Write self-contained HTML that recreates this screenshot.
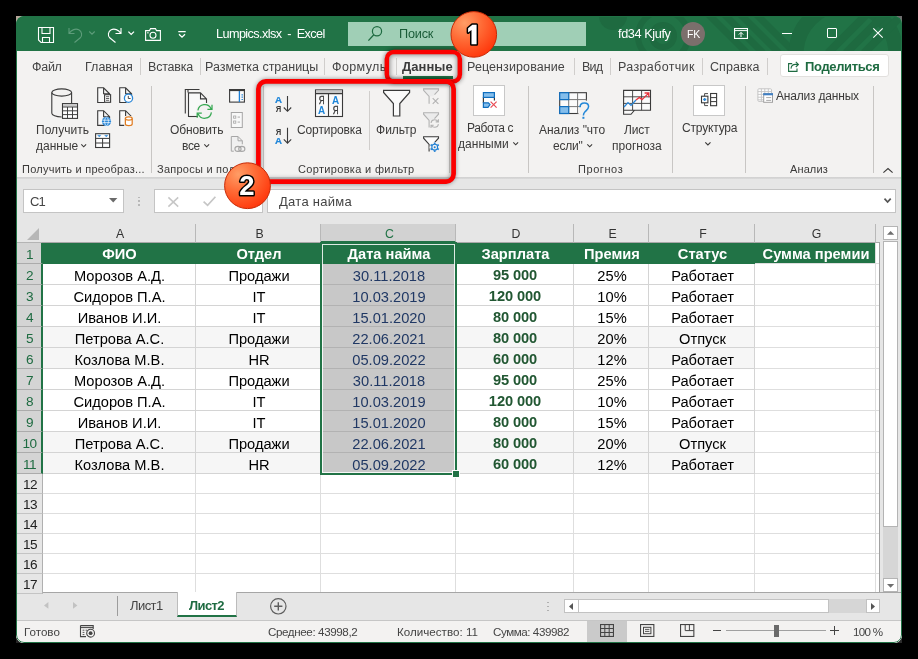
<!DOCTYPE html>
<html><head><meta charset="utf-8"><title>Excel</title>
<style>
*{box-sizing:border-box;margin:0;padding:0}
html,body{width:918px;height:659px;background:#000;overflow:hidden}
body{font-family:"Liberation Sans",sans-serif;font-size:13px;color:#333;position:relative}
.a{position:absolute}
svg{display:block;overflow:visible}
#win{left:0;top:0;width:918px;height:659px;background:#f3f2f1;clip-path:inset(16px 16px 16px 16px round 8px)}
#winb{left:16px;top:16px;width:886px;height:627px;border:1px solid #217346;border-radius:8px;pointer-events:none}
.t{white-space:nowrap;line-height:1}
.sep{width:1px;background:#c8c6c4}
.wb{background:#fff;border:1px solid #c6c6c6}
.ch{top:224px;height:19px;font-size:12.3px;color:#333;text-align:center;line-height:20px;background:#e6e6e6;border-right:1px solid #b8b8b8;border-bottom:1px solid #a8a8a8;padding-left:3px}
.ch.sel{background:#d2d2d2;color:#217346;border-bottom:2px solid #217346}
.rh{left:17px;width:26px;z-index:2;padding-left:1px;letter-spacing:-0.5px;background:#e6e6e6;font-size:13.6px;color:#222;text-align:center;border-bottom:1px solid #c4c4c4;border-right:1px solid #b0b0b0}
.rh.rsel{background:#d4d4d4;color:#1e6b41;border-right:2px solid #217346;border-bottom-color:#ababab}
.c{font-size:14.67px;color:#000;text-align:center;white-space:nowrap;border-right:1px solid #d4d4d4;border-bottom:1px solid #d4d4d4;overflow:hidden;padding-left:2px;padding-top:1px}
.h{background:#217346;color:#fff;font-weight:bold;border-color:#217346;padding-top:0}
.g{color:#215732;font-weight:bold;letter-spacing:-0.1px;padding-top:0;padding-left:1px}
.s{background:#c8c8c8;color:#203864;border-color:#b2b2b2}
.t,.c,.ch,.rh{will-change:transform}
.z{background:#f6f6f6}
.e{border-color:#dedede}

</style></head><body>
<div class="a" style="left:16px;top:16px;width:6px;height:6px;background:#b8a69a"></div>
<div class="a" style="left:896px;top:16px;width:6px;height:6px;background:#6e6e6e"></div>
<div class="a" style="left:16px;top:637px;width:6px;height:6px;background:#262626"></div>
<div class="a" style="left:896px;top:637px;width:6px;height:6px;background:#2c2c2c"></div>
<div id="win" class="a">
<!-- s_title -->
<div class="a" style="left:16px;top:16px;width:886px;height:35px;background:#217346;"></div>
<svg class="a" style="left:0px;top:0px" width="918" height="659"><defs><clipPath id="tc"><rect x="16" y="16" width="886" height="35"/></clipPath></defs><g clip-path="url(#tc)" fill="none" stroke="#1e6a40"><circle cx="613" cy="16" r="14" fill="#1e6a40" stroke="none"/><circle cx="663" cy="36" r="11" stroke-width="6"/><circle cx="663" cy="36" r="25" stroke-width="6"/><path d="M708 14L747 53" stroke-width="7"/><path d="M724 14L763 53" stroke-width="7"/><path d="M740 14L779 53" stroke-width="7"/><path d="M756 14L795 53" stroke-width="7"/><circle cx="846" cy="54" r="50" stroke-width="15"/><path d="M828 53L867 14" stroke-width="8"/><path d="M846 53L885 14" stroke-width="8"/><path d="M864 53L903 14" stroke-width="8"/></g></svg>
<svg class="a" style="left:38px;top:27px" width="16" height="16"><path d="M.5 .5H15.5V15.5H3L.5 13Z M4 .5V6.5H12V.5 M4.5 15.5V10.5H11.5V15.5" fill="none" stroke="#fff" stroke-width="1.1"/></svg>
<svg class="a" style="left:68px;top:27px" width="15" height="16"><path d="M1 1V6.5H6.5 M1.2 6.3C3.5 2.8 7.5 1.2 10.8 2.8C14 4.6 14.5 8.3 12.3 10.8L6.5 15.5" fill="none" stroke="#5d9c7a" stroke-width="1.1"/></svg>
<svg class="a" style="left:89px;top:31px" width="6" height="4"><path d="M.3 .5L3 3.2L5.7 .5" fill="none" stroke="#5d9c7a" stroke-width="1.1"/></svg>
<svg class="a" style="left:107px;top:27px" width="15" height="16"><path d="M14 1V6.5H8.5 M13.8 6.3C11.5 2.8 7.5 1.2 4.2 2.8C1 4.6 .5 8.3 2.7 10.8L8.5 15.5" fill="none" stroke="#fff" stroke-width="1.1"/></svg>
<svg class="a" style="left:127.5px;top:31px" width="7" height="4.5"><path d="M.4 .6L3.2 3.4L6 .6" fill="none" stroke="#fff" stroke-width="1.3"/></svg>
<svg class="a" style="left:145px;top:28px" width="16" height="13"><path d="M.6 2.6H4.5L5.6 .6H10.4L11.5 2.6H15.4V12.4H.6Z" fill="none" stroke="#fff" stroke-width="1.1"/><circle cx="8" cy="7.3" r="3" fill="none" stroke="#fff" stroke-width="1.1"/><rect x="2.2" y="4.2" width="1.4" height="1.2" fill="#fff"/></svg>
<svg class="a" style="left:177.5px;top:30.5px" width="8" height="7"><path d="M.3 .7H7.7" stroke="#fff" stroke-width="1.2"/><path d="M1 3.2L4 6.1L7 3.2" fill="none" stroke="#fff" stroke-width="1.3"/></svg>
<div class="a t" style="left:216.3px;top:27px;line-height:14px;font-size:12.7px;letter-spacing:-0.60px;color:#fff;white-space:pre;">Lumpics.xlsx  -  Excel</div>
<div class="a" style="left:348px;top:22px;width:238px;height:24px;background:#a0cfb6;"></div>
<svg class="a" style="left:0px;top:0px" width="918" height="659"><circle cx="377" cy="31.3" r="4.6" fill="none" stroke="#1e6b41" stroke-width="1.2"/><path d="M373.8 34.7L368.4 40.6" stroke="#1e6b41" stroke-width="1.3"/></svg>
<div class="a t" style="left:398.6px;top:27px;line-height:14px;font-size:12.7px;letter-spacing:-0.19px;color:#1a5c38;">Поиск</div>
<div class="a t" style="left:617.5px;top:27px;line-height:14px;font-size:12.7px;letter-spacing:-0.39px;color:#fff;">fd34 Kjufy</div>
<div class="a" style="left:681px;top:22px;width:24px;height:24px;background:#7b6f6c;border-radius:12px"></div>
<div class="a t" style="left:686.5px;top:28px;line-height:12px;font-size:10.5px;letter-spacing:-0.21px;color:#fff;">FK</div>
<svg class="a" style="left:734px;top:28px" width="14" height="11"><rect x=".55" y=".55" width="12.9" height="9.9" fill="none" stroke="#fff" stroke-width="1.1"/><path d="M.5 2.6H13.5" stroke="#fff" stroke-width="1"/><path d="M7 9V4.6M4.8 6.6L7 4.4L9.2 6.6" fill="none" stroke="#fff" stroke-width="1"/></svg>
<div class="a" style="left:781.5px;top:32.5px;width:10px;height:1px;background:#fff;"></div>
<div class="a" style="left:827px;top:28px;width:10px;height:10px;border:1px solid #fff;border-radius:1px"></div>
<svg class="a" style="left:873px;top:28px" width="10" height="10"><path d="M.3 .3L9.7 9.7M9.7 .3L.3 9.7" stroke="#fff" stroke-width="1.1"/></svg>
<!-- s_tabs -->
<div class="a t" style="left:32.4px;top:60px;line-height:14px;font-size:12.5px;letter-spacing:-0.28px;color:#444;">Файл</div>
<div class="a t" style="left:85.0px;top:60px;line-height:14px;font-size:12.5px;letter-spacing:0.02px;color:#444;">Главная</div>
<div class="a t" style="left:147.7px;top:60px;line-height:14px;font-size:12.5px;letter-spacing:-0.21px;color:#444;">Вставка</div>
<div class="a t" style="left:205.2px;top:60px;line-height:14px;font-size:12.5px;letter-spacing:-0.01px;color:#444;">Разметка страницы</div>
<div class="a t" style="left:332.4px;top:60px;line-height:14px;font-size:12.5px;letter-spacing:0.38px;color:#444;">Формулы</div>
<div class="a t" style="left:402.2px;top:59px;line-height:15px;font-size:13px;font-weight:700;letter-spacing:0.04px;color:#3b3b3b;">Данные</div>
<div class="a" style="left:402.5px;top:76px;width:50.5px;height:3px;background:#217346;"></div>
<div class="a t" style="left:467.0px;top:60px;line-height:14px;font-size:12.5px;letter-spacing:0.10px;color:#444;">Рецензирование</div>
<div class="a t" style="left:582.4px;top:60px;line-height:14px;font-size:12.5px;letter-spacing:-0.77px;color:#444;">Вид</div>
<div class="a t" style="left:618.0px;top:60px;line-height:14px;font-size:12.5px;letter-spacing:0.35px;color:#444;">Разработчик</div>
<div class="a t" style="left:709.5px;top:60px;line-height:14px;font-size:12.5px;letter-spacing:0.06px;color:#444;">Справка</div>
<div class="a" style="left:140px;top:58px;width:1px;height:17px;background:#d0cecc;"></div>
<div class="a" style="left:200px;top:58px;width:1px;height:17px;background:#d0cecc;"></div>
<div class="a" style="left:324px;top:58px;width:1px;height:17px;background:#d0cecc;"></div>
<div class="a" style="left:395.5px;top:58px;width:1px;height:17px;background:#d0cecc;"></div>
<div class="a" style="left:574px;top:58px;width:1px;height:17px;background:#d0cecc;"></div>
<div class="a" style="left:610px;top:58px;width:1px;height:17px;background:#d0cecc;"></div>
<div class="a" style="left:702px;top:58px;width:1px;height:17px;background:#d0cecc;"></div>
<div class="a" style="left:766.5px;top:58px;width:1px;height:17px;background:#d0cecc;"></div>
<div class="a" style="left:780px;top:54px;width:109px;height:23px;background:#fff;border:1px solid #e2e0de;border-radius:3px"></div>
<svg class="a" style="left:788px;top:61px" width="11" height="11"><path d="M4.2 2.6H.6V10.4H9V7.4" fill="none" stroke="#1e6b41" stroke-width="1.1"/><path d="M3 7.6C3.2 4.8 5 3.4 7.6 3.4H10 M7.8 .8L10.4 3.4L7.8 6" fill="none" stroke="#1e6b41" stroke-width="1.1"/></svg>
<div class="a t" style="left:804.8px;top:59px;line-height:15px;font-size:13px;font-weight:700;letter-spacing:-0.36px;color:#1e6b41;">Поделиться</div>
<!-- s_ribbon -->
<div class="a" style="left:16px;top:177px;width:886px;height:5px;background:linear-gradient(#d0d0d0,#dadada 40%,#e6e6e6)"></div>
<svg class="a" style="left:0px;top:0px" width="918" height="659"><path d="M51.8 92.5V113.2C51.8 115.2 56 117 61.7 117 M71.6 92.5V103" fill="none" stroke="#3a3a3a" stroke-width="1.1"/><ellipse cx="61.7" cy="92.5" rx="9.9" ry="3.6" fill="none" stroke="#3a3a3a" stroke-width="1.1"/><rect x="62.5" y="103.6" width="15" height="14.8" fill="#fff" stroke="#3a3a3a" stroke-width="1.1"/><rect x="63" y="104.1" width="14" height="2.4" fill="#c8c8c8"/><path d="M62.5 107H77.5M62.5 110.8H77.5M62.5 114.6H77.5M67.5 107V118.4M72.5 107V118.4" stroke="#3a3a3a" stroke-width=".95"/></svg>
<div class="a t" style="left:35.6px;top:123px;line-height:14px;font-size:12px;letter-spacing:0.03px;color:#3b3a39;">Получить</div>
<div class="a t" style="left:36.2px;top:139px;line-height:14px;font-size:12px;letter-spacing:0.01px;color:#3b3a39;">данные</div>
<svg class="a" style="left:81px;top:144.2px" width="5.4" height="3"><path d="M.3 .3L2.7 2.8L5.1000000000000005 .3" fill="none" stroke="#3b3a39" stroke-width="1.1"/></svg>
<svg class="a" style="left:0px;top:0px" width="918" height="659"><path d="M103.60000000000001 87.8H97.7V102.5H104.10000000000001" fill="#fafafa" stroke="none"/><path d="M104.60000000000001 102.5H97.7V87.8H103.60000000000001L109.60000000000001 93.8V95.3 M103.60000000000001 87.8V93.8H109.60000000000001" fill="none" stroke="#3a3a3a" stroke-width="1.1"/><rect x="104.6" y="94.7" width="6" height="7.6" fill="#fff" stroke="#3a3a3a" stroke-width="1.1"/><path d="M106 96.7H109.2M106 98.5H109.2M106 100.3H109.2" stroke="#3a3a3a" stroke-width=".8"/><path d="M125.6 87.8H119.7V102.5H126.1" fill="#fafafa" stroke="none"/><path d="M126.6 102.5H119.7V87.8H125.6L131.6 93.8V95.3 M125.6 87.8V93.8H131.6" fill="none" stroke="#3a3a3a" stroke-width="1.1"/><circle cx="128.5" cy="98.2" r="4.1" fill="#fff" stroke="#2b88d8" stroke-width="1.3"/><path d="M128.3 95.9V98.5H130.6" fill="none" stroke="#3a3a3a" stroke-width=".9"/><path d="M103.60000000000001 110.7H97.7V125.4H104.10000000000001" fill="#fafafa" stroke="none"/><path d="M104.60000000000001 125.4H97.7V110.7H103.60000000000001L109.60000000000001 116.7V118.2 M103.60000000000001 110.7V116.7H109.60000000000001" fill="none" stroke="#3a3a3a" stroke-width="1.1"/><circle cx="106.5" cy="121.4" r="4.6" fill="#2b88d8"/><path d="M102.4 120.2H110.6M102.4 122.6H110.6" stroke="#fff" stroke-width=".7"/><ellipse cx="106.5" cy="121.4" rx="1.9" ry="4.2" fill="none" stroke="#fff" stroke-width=".7"/><path d="M125.6 110.7H119.7V125.4H126.1" fill="#fafafa" stroke="none"/><path d="M126.6 125.4H119.7V110.7H125.6L131.6 116.7V118.2 M125.6 110.7V116.7H131.6" fill="none" stroke="#3a3a3a" stroke-width="1.1"/><rect x="124.2" y="116" width="9" height="10" fill="#f3f2f1"/><path d="M125.4 118.6V124C125.4 125 126.9 125.6 128.8 125.6C130.7 125.6 132.2 125 132.2 124V118.6" fill="#fff" stroke="#e07b1f" stroke-width="1.2"/><ellipse cx="128.8" cy="118.5" rx="3.4" ry="1.6" fill="#fff" stroke="#e07b1f" stroke-width="1.2"/><rect x="95.6" y="133.7" width="14" height="13.8" fill="#fff" stroke="#3a3a3a" stroke-width="1.1"/><path d="M95.6 138.4H109.6M95.6 143H109.6M102.6 138.4V147.5" stroke="#3a3a3a" stroke-width="1"/><path d="M97.6 135.3H101L99.3 137ZM104.6 135.3H108L106.3 137Z" fill="#2b88d8" stroke="#2b88d8" stroke-width=".3"/></svg>
<div class="a t" style="left:21.8px;top:163px;line-height:12px;font-size:11px;letter-spacing:0.24px;color:#3b3a39;">Получить и преобраз...</div>
<div class="a" style="left:151px;top:85.5px;width:1px;height:87px;background:#c8c6c4;"></div>
<div class="a" style="left:263px;top:85.5px;width:1px;height:87px;background:#c8c6c4;"></div>
<div class="a" style="left:449px;top:85.5px;width:1px;height:87px;background:#c8c6c4;"></div>
<div class="a" style="left:528px;top:85.5px;width:1px;height:87px;background:#c8c6c4;"></div>
<div class="a" style="left:672px;top:85.5px;width:1px;height:87px;background:#c8c6c4;"></div>
<div class="a" style="left:745px;top:85.5px;width:1px;height:87px;background:#c8c6c4;"></div>
<div class="a" style="left:873px;top:85.5px;width:1px;height:87px;background:#c8c6c4;"></div>
<svg class="a" style="left:0px;top:0px" width="918" height="659"><path d="M188 92.5V89.5H199.5 M185.3 113.5V89.5H188" fill="none" stroke="#3a3a3a" stroke-width="1.1"/><path d="M198 116.5H188.5V92.9H200.5L206.5 98.9V103 M200.5 92.9V98.9H206.5" fill="#f8f8f8" stroke="#3a3a3a" stroke-width="1.1"/><circle cx="204.6" cy="111.3" r="8.6" fill="#f3f2f1"/><path d="M188.5 116.5H198" stroke="#3a3a3a" stroke-width="1.1"/><path d="M197.9 110.4A6.9 6.9 0 0 1 211 108.7M212 104.8V109.4H207.4M211.4 112.3A6.9 6.9 0 0 1 198.2 114M197.2 117.8V113.2H201.8" fill="none" stroke="#36a852" stroke-width="1.25"/><rect x="229.6" y="89.9" width="14.8" height="12.2" fill="#fbfbfb" stroke="#3a3a3a" stroke-width="1.1"/><rect x="229" y="89" width="16" height="2.1" fill="#3a3a3a"/><path d="M239.4 91V102" stroke="#1f7fd4" stroke-width="1.3"/><path d="M242.2 94.3V95.5M242.2 96.6V97.8M242.2 98.9V100.1" stroke="#1f7fd4" stroke-width="1.4"/><rect x="231.3" y="112.5" width="11" height="15" fill="#f8f8f8" stroke="#a6a6a6" stroke-width="1"/><rect x="233.6" y="116" width="2.2" height="2.2" fill="none" stroke="#a6a6a6" stroke-width=".8"/><rect x="233.6" y="121" width="2.2" height="2.2" fill="none" stroke="#a6a6a6" stroke-width=".8"/><path d="M237.6 117.1H240M237.6 122.1H240" stroke="#a6a6a6" stroke-width=".9"/><path d="M234 151.2H231.3V136.5H238L242.3 140.8V144.5 M238 136.5V140.8H242.3" fill="#f0f0f0" stroke="#a6a6a6" stroke-width="1"/><rect x="233.8" y="144.6" width="12" height="8" fill="#f3f2f1"/><ellipse cx="238" cy="148.9" rx="3.1" ry="2.5" fill="none" stroke="#a6a6a6" stroke-width="1.1"/><ellipse cx="241.8" cy="148.9" rx="3.1" ry="2.5" fill="none" stroke="#a6a6a6" stroke-width="1.1"/></svg>
<div class="a t" style="left:169.5px;top:123px;line-height:14px;font-size:12px;letter-spacing:-0.12px;color:#3b3a39;">Обновить</div>
<div class="a t" style="left:182.3px;top:139px;line-height:14px;font-size:12px;letter-spacing:-0.31px;color:#3b3a39;">все</div>
<svg class="a" style="left:204px;top:144.2px" width="5.4" height="3"><path d="M.3 .3L2.7 2.8L5.1000000000000005 .3" fill="none" stroke="#3b3a39" stroke-width="1.1"/></svg>
<div class="a t" style="left:156.9px;top:163px;line-height:12px;font-size:11px;letter-spacing:0.00px;color:#3b3a39;letter-spacing:0.25px;">Запросы и подкл...</div>
<svg class="a" style="left:0px;top:0px" width="918" height="659"><text transform="translate(275 102.8) scale(1.043 1)" font-family="Liberation Sans" font-weight="700" font-size="9.3" fill="#1f86d9" stroke="#1f86d9" stroke-width="0.25">А</text><text transform="translate(275.8 111.9) scale(0.819 1)" font-family="Liberation Sans" font-weight="700" font-size="9.3" fill="#3a3a3a">Я</text><path d="M287.5 96V111.2 M283.8 107.5L287.5 111.3L291.2 107.5" fill="none" stroke="#3a3a3a" stroke-width="1.1"/><text transform="translate(275.8 134.5) scale(0.819 1)" font-family="Liberation Sans" font-weight="700" font-size="9.3" fill="#3a3a3a">Я</text><text transform="translate(275 143.9) scale(1.043 1)" font-family="Liberation Sans" font-weight="700" font-size="9.3" fill="#1f86d9" stroke="#1f86d9" stroke-width="0.25">А</text><path d="M287.5 127.8V143 M283.8 139.3L287.5 143.1L291.2 139.3" fill="none" stroke="#3a3a3a" stroke-width="1.1"/><rect x="315.5" y="89.9" width="27" height="26.6" fill="#fafafa" stroke="#3a3a3a" stroke-width="1.1"/><rect x="316" y="90.4" width="26" height="2.9" fill="#c8c8c8"/><path d="M315.5 93.6H342.5M328.5 93.6V116.5" stroke="#3a3a3a" stroke-width="1.1"/><text transform="translate(318.8 103.6) scale(0.772 1)" font-family="Liberation Sans" font-weight="400" font-size="10.4" fill="#3a3a3a" stroke="#3a3a3a" stroke-width="0.35">Я</text><text transform="translate(318 113.7) scale(0.997 1)" font-family="Liberation Sans" font-weight="700" font-size="10" fill="#1f86d9">А</text><text transform="translate(332 103.5) scale(0.997 1)" font-family="Liberation Sans" font-weight="700" font-size="10" fill="#1f86d9">А</text><text transform="translate(332.8 113.8) scale(0.772 1)" font-family="Liberation Sans" font-weight="400" font-size="10.4" fill="#3a3a3a" stroke="#3a3a3a" stroke-width="0.35">Я</text><path d="M383.6 90.3H409.6V92.4L399.8 103.6V116H393.4V103.6L383.6 92.4Z" fill="#fafafa" stroke="#3a3a3a" stroke-width="1.2" stroke-linejoin="miter"/><path d="M423.6 88.89999999999999H438.5V90.3L433.1 96.3H429.1L423.6 90.3Z" fill="#ebebeb"/><path d="M434.5 94.7L438.5 90.3V88.89999999999999H423.6V90.3L429.1 96.5V103.7" fill="none" stroke="#b2b2b2" stroke-width="1.1"/><path d="M432.7 98.2L438.4 103.8M438.4 98.2L432.7 103.8" stroke="#b2b2b2" stroke-width="1.1"/><path d="M423.6 112.8H438.5V114.2L433.1 120.2H429.1L423.6 114.2Z" fill="#ebebeb"/><path d="M434.5 118.60000000000001L438.5 114.2V112.8H423.6V114.2L429.1 120.4V127.60000000000001" fill="none" stroke="#b2b2b2" stroke-width="1.1"/><path d="M431 122.8C431.3 120.8 432.9 119.8 434.7 119.8C436.2 119.8 437.4 120.5 438 121.6M438.4 119.2V121.9H435.7 M438.4 124.2C438.1 126.2 436.5 127.3 434.7 127.3C433.2 127.3 432 126.6 431.4 125.5M431 127.9V125.2H433.7" fill="none" stroke="#b2b2b2" stroke-width="1.1"/><path d="M423.6 136.79999999999998H438.5V138.2L433.1 144.2H429.1L423.6 138.2Z" fill="#fbfbfb"/><path d="M434.5 142.6L438.5 138.2V136.79999999999998H423.6V138.2L429.1 144.39999999999998V151.6" fill="none" stroke="#3a3a3a" stroke-width="1.1"/><circle cx="434.7" cy="147.2" r="5.2" fill="#f3f2f1"/><circle cx="434.7" cy="147.2" r="2.9" fill="none" stroke="#1f7fd4" stroke-width="1.1"/><path d="M437.47 148.80L438.77 149.55" stroke="#1f7fd4" stroke-width="1.7"/><path d="M434.70 150.40L434.70 151.90" stroke="#1f7fd4" stroke-width="1.7"/><path d="M431.93 148.80L430.63 149.55" stroke="#1f7fd4" stroke-width="1.7"/><path d="M431.93 145.60L430.63 144.85" stroke="#1f7fd4" stroke-width="1.7"/><path d="M434.70 144.00L434.70 142.50" stroke="#1f7fd4" stroke-width="1.7"/><path d="M437.47 145.60L438.77 144.85" stroke="#1f7fd4" stroke-width="1.7"/><circle cx="434.7" cy="147.2" r="1" fill="#1f7fd4"/></svg>
<div class="a t" style="left:296.7px;top:123px;line-height:14px;font-size:12px;letter-spacing:-0.11px;color:#3b3a39;">Сортировка</div>
<div class="a t" style="left:376.4px;top:123px;line-height:14px;font-size:12px;letter-spacing:0.01px;color:#3b3a39;">Фильтр</div>
<div class="a" style="left:369px;top:91px;width:1px;height:58.5px;background:#d0cecc;"></div>
<div class="a t" style="left:297.6px;top:163px;line-height:12px;font-size:11px;letter-spacing:0.33px;color:#3b3a39;">Сортировка и фильтр</div>
<div class="a" style="left:473.3px;top:85.3px;width:31.6px;height:30.6px;background:#fff;border:1px solid #c8c8c8"></div>
<svg class="a" style="left:0px;top:0px" width="918" height="659"><path d="M483.4 97.3V103M494.4 97.3V100.6" stroke="#3a3a3a" stroke-width="1.2"/><rect x="483.4" y="92.6" width="11" height="4.8" fill="#86bfec" stroke="#106ebe" stroke-width="1.2"/><path d="M483.4 102.8H488.4L490 104.6L488 107.3H483.4Z" fill="#86bfec" stroke="#106ebe" stroke-width="1.2"/><path d="M490.6 101.6L496.6 107.6M496.6 101.6L490.6 107.6" stroke="#e84a54" stroke-width="1.15"/></svg>
<div class="a t" style="left:466.9px;top:121px;line-height:14px;font-size:12px;letter-spacing:-0.35px;color:#3b3a39;">Работа с</div>
<div class="a t" style="left:457.7px;top:137px;line-height:14px;font-size:12px;letter-spacing:0.03px;color:#3b3a39;">данными</div>
<svg class="a" style="left:513.2px;top:142.2px" width="5.4" height="3"><path d="M.3 .3L2.7 2.8L5.1000000000000005 .3" fill="none" stroke="#3b3a39" stroke-width="1.1"/></svg>
<svg class="a" style="left:0px;top:0px" width="918" height="659"><rect x="559.7" y="92.7" width="26.7" height="20.8" fill="#fbfbfb" stroke="#3a3a3a" stroke-width="1.1"/><path d="M559.7 99.6H586.4M559.7 106.6H586.4M568.7 92.7V113.5M577.6 92.7V113.5" stroke="#777" stroke-width="1"/><rect x="559.7" y="92.7" width="9" height="6.9" fill="#83bdeb" stroke="#106ebe" stroke-width="1.2"/><rect x="559.7" y="106.6" width="9" height="6.9" fill="#83bdeb" stroke="#106ebe" stroke-width="1.2"/><rect x="581" y="100.6" width="10" height="20" fill="#f3f2f1"/><rect x="578.4" y="107.4" width="4" height="7" fill="#f3f2f1"/><path d="M580 107.2C580 104.2 582 102.9 584.4 102.9C587 102.9 588.6 104.6 588.6 106.6C588.6 109 586.6 110.2 585 111.8C583.8 113 583.4 114 583.4 115.4" fill="none" stroke="#2488d8" stroke-width="1.5"/><rect x="582.4" y="116.8" width="2" height="2" fill="#2488d8"/><path d="M623.6 90.4H650.5V110.2H634.5L631 114.3H623.6Z M623.6 110.2H634.5" fill="#fafafa" stroke="#3a3a3a" stroke-width="1.1"/><path d="M623.6 96.8H650.5M623.6 103.4H650.5M632.6 90.4V110.2M641.6 90.4V110.2" stroke="#3a3a3a" stroke-width=".9"/><path d="M624 107L628 102.6L631 105.4L636 100" fill="none" stroke="#2b88d8" stroke-width="1.3"/><path d="M636 100L639.4 97.4L642 99.6L648.4 93.4 M644.6 93H648.8V97.2" fill="none" stroke="#e8343e" stroke-width="1.3"/></svg>
<div class="a t" style="left:539.2px;top:123px;line-height:14px;font-size:12px;letter-spacing:-0.03px;color:#3b3a39;">Анализ "что</div>
<div class="a t" style="left:552.6px;top:139px;line-height:14px;font-size:12px;letter-spacing:-0.19px;color:#3b3a39;">если"</div>
<svg class="a" style="left:586.6px;top:144.2px" width="5.4" height="3"><path d="M.3 .3L2.7 2.8L5.1000000000000005 .3" fill="none" stroke="#3b3a39" stroke-width="1.1"/></svg>
<div class="a t" style="left:624.3px;top:123px;line-height:14px;font-size:12px;letter-spacing:-0.14px;color:#3b3a39;">Лист</div>
<div class="a t" style="left:611.7px;top:139px;line-height:14px;font-size:12px;letter-spacing:0.02px;color:#3b3a39;">прогноза</div>
<div class="a t" style="left:577.5px;top:163px;line-height:12px;font-size:11px;letter-spacing:0.57px;color:#3b3a39;">Прогноз</div>
<div class="a" style="left:693.2px;top:85.3px;width:31.6px;height:30.6px;background:#fff;border:1px solid #c8c8c8"></div>
<svg class="a" style="left:0px;top:0px" width="918" height="659"><rect x="701.5" y="96.2" width="6.4" height="6.6" fill="#fff" stroke="#3a3a3a" stroke-width="1.1"/><path d="M704.7 97.9V101.1M703.1 99.5H706.3" stroke="#2b88d8" stroke-width="1.3"/><path d="M708 93.6H704.6V96 M708 105.6H704.6V103" fill="none" stroke="#3a3a3a" stroke-width=".9"/><rect x="710.6" y="93.5" width="6" height="12.2" fill="#fff" stroke="#3a3a3a" stroke-width="1.1"/><path d="M710.6 97.6H716.6M710.6 101.6H716.6" stroke="#3a3a3a" stroke-width="1"/></svg>
<div class="a t" style="left:681.5px;top:121px;line-height:14px;font-size:12px;letter-spacing:-0.18px;color:#3b3a39;">Структура</div>
<svg class="a" style="left:705.3px;top:141.8px" width="5.8" height="3.2"><path d="M.3 .3L2.9 3.0L5.5 .3" fill="none" stroke="#3b3a39" stroke-width="1.1"/></svg>
<svg class="a" style="left:0px;top:0px" width="918" height="659"><rect x="757.9" y="88.8" width="13.6" height="12.6" rx="1" fill="#fff" stroke="#c4c4c4" stroke-width="1"/><path d="M757.9 91.6H771.5M757.9 94.4H771.5M757.9 97.2H771.5M757.9 99.8H771.5M761.4 88.8V101.4M764.8 88.8V101.4M768.3 88.8V101.4" stroke="#c4c4c4" stroke-width=".9"/><rect x="763.7" y="93.7" width="8.8" height="8.6" fill="#fff" stroke="#a0a0a0" stroke-width="1"/><rect x="763.2" y="93.2" width="9.8" height="2.1" fill="#3f7fc4"/><path d="M766.2 97.6H771.2M766.2 100.4H771.2" stroke="#a0a0a0" stroke-width=".9"/></svg>
<div class="a t" style="left:776.4px;top:89px;line-height:14px;font-size:12px;letter-spacing:-0.19px;color:#3b3a39;">Анализ данных</div>
<div class="a t" style="left:790.1px;top:163px;line-height:12px;font-size:11px;letter-spacing:0.11px;color:#3b3a39;">Анализ</div>
<svg class="a" style="left:882.8px;top:168px" width="10" height="5"><path d="M.4 4.7L5 .5L9.6 4.7" fill="none" stroke="#3b3a39" stroke-width="1.1"/></svg>
<!-- s_fb -->
<div class="a" style="left:16px;top:179px;width:886px;height:45px;background:#e6e6e6;"></div>
<div class="a" style="left:22.5px;top:189px;width:101px;height:24px;background:#fff;border:1px solid #c4c4c4"></div>
<div class="a t" style="left:29.7px;top:194px;line-height:15px;font-size:13px;letter-spacing:-0.91px;color:#444;">C1</div>
<svg class="a" style="left:109px;top:198px" width="8.4" height="4.4"><path d="M0 0H8.4L4.2 4.4Z" fill="#6a6a6a"/></svg>
<div class="a" style="left:137.8px;top:196.6px;width:1.8px;height:1.8px;background:#b8b8b8;"></div>
<div class="a" style="left:137.8px;top:200.3px;width:1.8px;height:1.8px;background:#b8b8b8;"></div>
<div class="a" style="left:137.8px;top:204px;width:1.8px;height:1.8px;background:#b8b8b8;"></div>
<div class="a" style="left:154px;top:189px;width:109.2px;height:24px;background:#fff;border:1px solid #c4c4c4"></div>
<svg class="a" style="left:167.5px;top:196.6px" width="10.6" height="10"><path d="M.4 .4L10.2 9.6M10.2 .4L.4 9.6" stroke="#c6c6c6" stroke-width="1.5"/></svg>
<svg class="a" style="left:202.6px;top:196.4px" width="13" height="10.4"><path d="M.6 5.6L4.6 9.4L12.4 .8" fill="none" stroke="#c6c6c6" stroke-width="1.7"/></svg>
<div class="a" style="left:267.4px;top:189px;width:628.4px;height:24px;background:#fff;border:1px solid #c4c4c4"></div>
<div class="a t" style="left:279.0px;top:194px;line-height:15px;font-size:13px;letter-spacing:0.28px;color:#444;">Дата найма</div>
<svg class="a" style="left:884px;top:197.6px" width="7.2" height="5"><path d="M.5 .6L3.6 4L6.7 .6" fill="none" stroke="#555" stroke-width="1.7"/></svg>
<!-- s_grid -->
<div class="a" style="left:17px;top:224px;width:884px;height:368px;background:#fff;"></div>
<div class="a" style="left:17px;top:224px;width:884px;height:19px;background:#e6e6e6;"></div>
<div class="a" style="left:17px;top:224px;width:26px;height:19px;background:#e6e6e6;border-right:1px solid #b4b4b4;border-bottom:1px solid #b4b4b4"></div>
<svg class="a" style="left:27px;top:228px" width="12" height="12"><path d="M12 0V12H0Z" fill="#b7b7b7"/></svg>
<div class="a ch" style="left:42px;width:154px">A</div>
<div class="a ch" style="left:196px;width:125px">B</div>
<div class="a ch sel" style="left:321px;width:135px">C</div>
<div class="a ch" style="left:456px;width:118px">D</div>
<div class="a ch" style="left:574px;width:75px">E</div>
<div class="a ch" style="left:649px;width:106px">F</div>
<div class="a ch" style="left:755px;width:121px">G</div>
<div class="a rh rsel" style="top:243px;height:21px;line-height:23px">1</div>
<div class="a c h" style="left:42px;top:243px;width:154px;height:21px;line-height:22px">ФИО</div>
<div class="a c h" style="left:196px;top:243px;width:125px;height:21px;line-height:22px">Отдел</div>
<div class="a c h" style="left:321px;top:243px;width:135px;height:21px;line-height:22px">Дата найма</div>
<div class="a c h" style="left:456px;top:243px;width:118px;height:21px;line-height:22px">Зарплата</div>
<div class="a c h" style="left:574px;top:243px;width:75px;height:21px;line-height:22px">Премия</div>
<div class="a c h" style="left:649px;top:243px;width:106px;height:21px;line-height:22px">Статус</div>
<div class="a c h e" style="left:755px;top:243px;width:121px;height:21px;line-height:22px">Сумма премии</div>
<div class="a rh rsel" style="top:264px;height:21px;line-height:23px">2</div>
<div class="a c" style="left:42px;top:264px;width:154px;height:21px;line-height:22px">Морозов А.Д.</div>
<div class="a c" style="left:196px;top:264px;width:125px;height:21px;line-height:22px">Продажи</div>
<div class="a c s" style="left:321px;top:264px;width:135px;height:21px;line-height:22px">30.11.2018</div>
<div class="a c g" style="left:456px;top:264px;width:118px;height:21px;line-height:22px">95 000</div>
<div class="a c" style="left:574px;top:264px;width:75px;height:21px;line-height:22px">25%</div>
<div class="a c" style="left:649px;top:264px;width:106px;height:21px;line-height:22px">Работает</div>
<div class="a c e" style="left:755px;top:264px;width:121px;height:21px;line-height:22px"></div>
<div class="a rh rsel" style="top:285px;height:21px;line-height:23px">3</div>
<div class="a c" style="left:42px;top:285px;width:154px;height:21px;line-height:22px">Сидоров П.А.</div>
<div class="a c" style="left:196px;top:285px;width:125px;height:21px;line-height:22px">IT</div>
<div class="a c s" style="left:321px;top:285px;width:135px;height:21px;line-height:22px">10.03.2019</div>
<div class="a c g" style="left:456px;top:285px;width:118px;height:21px;line-height:22px">120 000</div>
<div class="a c" style="left:574px;top:285px;width:75px;height:21px;line-height:22px">10%</div>
<div class="a c" style="left:649px;top:285px;width:106px;height:21px;line-height:22px">Работает</div>
<div class="a c e" style="left:755px;top:285px;width:121px;height:21px;line-height:22px"></div>
<div class="a rh rsel" style="top:306px;height:21px;line-height:23px">4</div>
<div class="a c" style="left:42px;top:306px;width:154px;height:21px;line-height:22px">Иванов И.И.</div>
<div class="a c" style="left:196px;top:306px;width:125px;height:21px;line-height:22px">IT</div>
<div class="a c s" style="left:321px;top:306px;width:135px;height:21px;line-height:22px">15.01.2020</div>
<div class="a c g" style="left:456px;top:306px;width:118px;height:21px;line-height:22px">80 000</div>
<div class="a c" style="left:574px;top:306px;width:75px;height:21px;line-height:22px">15%</div>
<div class="a c" style="left:649px;top:306px;width:106px;height:21px;line-height:22px">Работает</div>
<div class="a c e" style="left:755px;top:306px;width:121px;height:21px;line-height:22px"></div>
<div class="a rh rsel" style="top:327px;height:21px;line-height:23px">5</div>
<div class="a c z" style="left:42px;top:327px;width:154px;height:21px;line-height:22px">Петрова А.С.</div>
<div class="a c z" style="left:196px;top:327px;width:125px;height:21px;line-height:22px">Продажи</div>
<div class="a c s" style="left:321px;top:327px;width:135px;height:21px;line-height:22px">22.06.2021</div>
<div class="a c g z" style="left:456px;top:327px;width:118px;height:21px;line-height:22px">80 000</div>
<div class="a c z" style="left:574px;top:327px;width:75px;height:21px;line-height:22px">20%</div>
<div class="a c z" style="left:649px;top:327px;width:106px;height:21px;line-height:22px">Отпуск</div>
<div class="a c e" style="left:755px;top:327px;width:121px;height:21px;line-height:22px"></div>
<div class="a rh rsel" style="top:348px;height:21px;line-height:23px">6</div>
<div class="a c z" style="left:42px;top:348px;width:154px;height:21px;line-height:22px">Козлова М.В.</div>
<div class="a c z" style="left:196px;top:348px;width:125px;height:21px;line-height:22px">HR</div>
<div class="a c s" style="left:321px;top:348px;width:135px;height:21px;line-height:22px">05.09.2022</div>
<div class="a c g z" style="left:456px;top:348px;width:118px;height:21px;line-height:22px">60 000</div>
<div class="a c z" style="left:574px;top:348px;width:75px;height:21px;line-height:22px">12%</div>
<div class="a c z" style="left:649px;top:348px;width:106px;height:21px;line-height:22px">Работает</div>
<div class="a c e" style="left:755px;top:348px;width:121px;height:21px;line-height:22px"></div>
<div class="a rh rsel" style="top:369px;height:21px;line-height:23px">7</div>
<div class="a c" style="left:42px;top:369px;width:154px;height:21px;line-height:22px">Морозов А.Д.</div>
<div class="a c" style="left:196px;top:369px;width:125px;height:21px;line-height:22px">Продажи</div>
<div class="a c s" style="left:321px;top:369px;width:135px;height:21px;line-height:22px">30.11.2018</div>
<div class="a c g" style="left:456px;top:369px;width:118px;height:21px;line-height:22px">95 000</div>
<div class="a c" style="left:574px;top:369px;width:75px;height:21px;line-height:22px">25%</div>
<div class="a c" style="left:649px;top:369px;width:106px;height:21px;line-height:22px">Работает</div>
<div class="a c e" style="left:755px;top:369px;width:121px;height:21px;line-height:22px"></div>
<div class="a rh rsel" style="top:390px;height:21px;line-height:23px">8</div>
<div class="a c" style="left:42px;top:390px;width:154px;height:21px;line-height:22px">Сидоров П.А.</div>
<div class="a c" style="left:196px;top:390px;width:125px;height:21px;line-height:22px">IT</div>
<div class="a c s" style="left:321px;top:390px;width:135px;height:21px;line-height:22px">10.03.2019</div>
<div class="a c g" style="left:456px;top:390px;width:118px;height:21px;line-height:22px">120 000</div>
<div class="a c" style="left:574px;top:390px;width:75px;height:21px;line-height:22px">10%</div>
<div class="a c" style="left:649px;top:390px;width:106px;height:21px;line-height:22px">Работает</div>
<div class="a c e" style="left:755px;top:390px;width:121px;height:21px;line-height:22px"></div>
<div class="a rh rsel" style="top:411px;height:21px;line-height:23px">9</div>
<div class="a c" style="left:42px;top:411px;width:154px;height:21px;line-height:22px">Иванов И.И.</div>
<div class="a c" style="left:196px;top:411px;width:125px;height:21px;line-height:22px">IT</div>
<div class="a c s" style="left:321px;top:411px;width:135px;height:21px;line-height:22px">15.01.2020</div>
<div class="a c g" style="left:456px;top:411px;width:118px;height:21px;line-height:22px">80 000</div>
<div class="a c" style="left:574px;top:411px;width:75px;height:21px;line-height:22px">15%</div>
<div class="a c" style="left:649px;top:411px;width:106px;height:21px;line-height:22px">Работает</div>
<div class="a c e" style="left:755px;top:411px;width:121px;height:21px;line-height:22px"></div>
<div class="a rh rsel" style="top:432px;height:21px;line-height:23px">10</div>
<div class="a c z" style="left:42px;top:432px;width:154px;height:21px;line-height:22px">Петрова А.С.</div>
<div class="a c z" style="left:196px;top:432px;width:125px;height:21px;line-height:22px">Продажи</div>
<div class="a c s" style="left:321px;top:432px;width:135px;height:21px;line-height:22px">22.06.2021</div>
<div class="a c g z" style="left:456px;top:432px;width:118px;height:21px;line-height:22px">80 000</div>
<div class="a c z" style="left:574px;top:432px;width:75px;height:21px;line-height:22px">20%</div>
<div class="a c z" style="left:649px;top:432px;width:106px;height:21px;line-height:22px">Отпуск</div>
<div class="a c e" style="left:755px;top:432px;width:121px;height:21px;line-height:22px"></div>
<div class="a rh rsel" style="top:453px;height:21px;line-height:23px">11</div>
<div class="a c z" style="left:42px;top:453px;width:154px;height:21px;line-height:22px">Козлова М.В.</div>
<div class="a c z" style="left:196px;top:453px;width:125px;height:21px;line-height:22px">HR</div>
<div class="a c s" style="left:321px;top:453px;width:135px;height:21px;line-height:22px">05.09.2022</div>
<div class="a c g z" style="left:456px;top:453px;width:118px;height:21px;line-height:22px">60 000</div>
<div class="a c z" style="left:574px;top:453px;width:75px;height:21px;line-height:22px">12%</div>
<div class="a c z" style="left:649px;top:453px;width:106px;height:21px;line-height:22px">Работает</div>
<div class="a c e" style="left:755px;top:453px;width:121px;height:21px;line-height:22px"></div>
<div class="a rh" style="top:474px;height:20px;line-height:22px">12</div>
<div class="a c e" style="left:42px;top:474px;width:154px;height:20px;line-height:21px"></div>
<div class="a c e" style="left:196px;top:474px;width:125px;height:20px;line-height:21px"></div>
<div class="a c e" style="left:321px;top:474px;width:135px;height:20px;line-height:21px"></div>
<div class="a c e" style="left:456px;top:474px;width:118px;height:20px;line-height:21px"></div>
<div class="a c e" style="left:574px;top:474px;width:75px;height:20px;line-height:21px"></div>
<div class="a c e" style="left:649px;top:474px;width:106px;height:20px;line-height:21px"></div>
<div class="a c e" style="left:755px;top:474px;width:121px;height:20px;line-height:21px"></div>
<div class="a rh" style="top:494px;height:20px;line-height:22px">13</div>
<div class="a c e" style="left:42px;top:494px;width:154px;height:20px;line-height:21px"></div>
<div class="a c e" style="left:196px;top:494px;width:125px;height:20px;line-height:21px"></div>
<div class="a c e" style="left:321px;top:494px;width:135px;height:20px;line-height:21px"></div>
<div class="a c e" style="left:456px;top:494px;width:118px;height:20px;line-height:21px"></div>
<div class="a c e" style="left:574px;top:494px;width:75px;height:20px;line-height:21px"></div>
<div class="a c e" style="left:649px;top:494px;width:106px;height:20px;line-height:21px"></div>
<div class="a c e" style="left:755px;top:494px;width:121px;height:20px;line-height:21px"></div>
<div class="a rh" style="top:514px;height:20px;line-height:22px">14</div>
<div class="a c e" style="left:42px;top:514px;width:154px;height:20px;line-height:21px"></div>
<div class="a c e" style="left:196px;top:514px;width:125px;height:20px;line-height:21px"></div>
<div class="a c e" style="left:321px;top:514px;width:135px;height:20px;line-height:21px"></div>
<div class="a c e" style="left:456px;top:514px;width:118px;height:20px;line-height:21px"></div>
<div class="a c e" style="left:574px;top:514px;width:75px;height:20px;line-height:21px"></div>
<div class="a c e" style="left:649px;top:514px;width:106px;height:20px;line-height:21px"></div>
<div class="a c e" style="left:755px;top:514px;width:121px;height:20px;line-height:21px"></div>
<div class="a rh" style="top:534px;height:20px;line-height:22px">15</div>
<div class="a c e" style="left:42px;top:534px;width:154px;height:20px;line-height:21px"></div>
<div class="a c e" style="left:196px;top:534px;width:125px;height:20px;line-height:21px"></div>
<div class="a c e" style="left:321px;top:534px;width:135px;height:20px;line-height:21px"></div>
<div class="a c e" style="left:456px;top:534px;width:118px;height:20px;line-height:21px"></div>
<div class="a c e" style="left:574px;top:534px;width:75px;height:20px;line-height:21px"></div>
<div class="a c e" style="left:649px;top:534px;width:106px;height:20px;line-height:21px"></div>
<div class="a c e" style="left:755px;top:534px;width:121px;height:20px;line-height:21px"></div>
<div class="a rh" style="top:554px;height:20px;line-height:22px">16</div>
<div class="a c e" style="left:42px;top:554px;width:154px;height:20px;line-height:21px"></div>
<div class="a c e" style="left:196px;top:554px;width:125px;height:20px;line-height:21px"></div>
<div class="a c e" style="left:321px;top:554px;width:135px;height:20px;line-height:21px"></div>
<div class="a c e" style="left:456px;top:554px;width:118px;height:20px;line-height:21px"></div>
<div class="a c e" style="left:574px;top:554px;width:75px;height:20px;line-height:21px"></div>
<div class="a c e" style="left:649px;top:554px;width:106px;height:20px;line-height:21px"></div>
<div class="a c e" style="left:755px;top:554px;width:121px;height:20px;line-height:21px"></div>
<div class="a rh" style="top:574px;height:20px;line-height:22px">17</div>
<div class="a c e" style="left:42px;top:574px;width:154px;height:20px;line-height:21px"></div>
<div class="a c e" style="left:196px;top:574px;width:125px;height:20px;line-height:21px"></div>
<div class="a c e" style="left:321px;top:574px;width:135px;height:20px;line-height:21px"></div>
<div class="a c e" style="left:456px;top:574px;width:118px;height:20px;line-height:21px"></div>
<div class="a c e" style="left:574px;top:574px;width:75px;height:20px;line-height:21px"></div>
<div class="a c e" style="left:649px;top:574px;width:106px;height:20px;line-height:21px"></div>
<div class="a c e" style="left:755px;top:574px;width:121px;height:20px;line-height:21px"></div>
<div class="a" style="left:876px;top:224px;width:26px;height:368px;background:#e6e6e6;"></div>
<div class="a" style="left:876px;top:242px;width:4px;height:350px;background:#fff;border-right:1px solid #a0a0a0;border-top:1px solid #a8a8a8"></div>
<div class="a" style="left:876px;top:263px;width:3px;height:1px;background:#dedede;"></div>
<div class="a" style="left:876px;top:284px;width:3px;height:1px;background:#dedede;"></div>
<div class="a" style="left:876px;top:305px;width:3px;height:1px;background:#dedede;"></div>
<div class="a" style="left:876px;top:326px;width:3px;height:1px;background:#dedede;"></div>
<div class="a" style="left:876px;top:347px;width:3px;height:1px;background:#dedede;"></div>
<div class="a" style="left:876px;top:368px;width:3px;height:1px;background:#dedede;"></div>
<div class="a" style="left:876px;top:389px;width:3px;height:1px;background:#dedede;"></div>
<div class="a" style="left:876px;top:410px;width:3px;height:1px;background:#dedede;"></div>
<div class="a" style="left:876px;top:431px;width:3px;height:1px;background:#dedede;"></div>
<div class="a" style="left:876px;top:452px;width:3px;height:1px;background:#dedede;"></div>
<div class="a" style="left:876px;top:473px;width:3px;height:1px;background:#dedede;"></div>
<div class="a" style="left:876px;top:493px;width:3px;height:1px;background:#dedede;"></div>
<div class="a" style="left:876px;top:513px;width:3px;height:1px;background:#dedede;"></div>
<div class="a" style="left:876px;top:533px;width:3px;height:1px;background:#dedede;"></div>
<div class="a" style="left:876px;top:553px;width:3px;height:1px;background:#dedede;"></div>
<div class="a" style="left:876px;top:573px;width:3px;height:1px;background:#dedede;"></div>
<div class="a" style="left:883px;top:241px;width:15px;height:352px;background:#d6d6d6;"></div>
<div class="a" style="left:883px;top:226.4px;width:15px;height:13.8px;background:#fff;border:1px solid #b4b4b4"></div>
<svg class="a" style="left:887px;top:231px" width="7.2" height="3.8"><path d="M0 3.8H7.2L3.6 0Z" fill="#6e6e6e"/></svg>
<div class="a" style="left:883px;top:241px;width:15px;height:285.6px;background:#fff;border:1px solid #b4b4b4"></div>
<div class="a" style="left:883px;top:578.3px;width:15px;height:14.2px;background:#fff;border:1px solid #b4b4b4"></div>
<svg class="a" style="left:887px;top:583.6px" width="7.2" height="3.8"><path d="M0 0H7.2L3.6 3.8Z" fill="#6e6e6e"/></svg>
<div class="a" style="left:320.3px;top:242px;width:136.6px;height:233.3px;border:2px solid #217346"></div>
<div class="a" style="left:322.3px;top:244px;width:132.6px;height:229.3px;border:1px solid rgba(255,255,255,.85)"></div>
<div class="a" style="left:451.6px;top:469.6px;width:6.8px;height:6.8px;background:#217346;border:1px solid #fff;box-sizing:content-box"></div>
<!-- s_bottom -->
<div class="a" style="left:16px;top:592px;width:886px;height:28px;background:#e6e6e6;border-top:1px solid #a6a6a6"></div>
<svg class="a" style="left:43.8px;top:601.6px" width="4.4" height="6.8"><path d="M4.4 0V6.8L0 3.4Z" fill="#c2c2c2"/></svg>
<svg class="a" style="left:73.2px;top:601.6px" width="4.4" height="6.8"><path d="M0 0V6.8L4.4 3.4Z" fill="#c2c2c2"/></svg>
<div class="a" style="left:117px;top:596px;width:1px;height:20px;background:#9c9c9c;"></div>
<div class="a t" style="left:130.4px;top:598px;line-height:15px;font-size:13px;letter-spacing:-0.58px;color:#444;">Лист1</div>
<div class="a" style="left:177px;top:592px;width:60px;height:25px;background:#fff;border-bottom:2px solid #217346;border-left:1px solid #bcbcbc;border-right:1px solid #bcbcbc"></div>
<div class="a t" style="left:189.2px;top:598px;line-height:15px;font-size:13px;font-weight:700;letter-spacing:-0.59px;color:#1e6b41;">Лист2</div>
<svg class="a" style="left:269.5px;top:597.7px" width="16.6" height="16.6"><circle cx="8.3" cy="8.3" r="7.7" fill="none" stroke="#5e5e5e" stroke-width="1.2"/><path d="M8.3 4.2V12.4M4.2 8.3H12.4" stroke="#5e5e5e" stroke-width="1.4"/></svg>
<div class="a" style="left:547.2px;top:601.6px;width:1.8px;height:1.8px;background:#b0b0b0;"></div>
<div class="a" style="left:547.2px;top:605.6px;width:1.8px;height:1.8px;background:#b0b0b0;"></div>
<div class="a" style="left:547.2px;top:609.6px;width:1.8px;height:1.8px;background:#b0b0b0;"></div>
<div class="a" style="left:829px;top:599.3px;width:37px;height:13.8px;background:#d6d6d6;"></div>
<div class="a" style="left:564.2px;top:599.3px;width:14.4px;height:13.8px;background:#fff;border:1px solid #c2c2c2"></div>
<svg class="a" style="left:569px;top:602.6px" width="4" height="7"><path d="M4 0V7L0 3.5Z" fill="#555"/></svg>
<div class="a" style="left:578px;top:599.3px;width:251.2px;height:13.8px;background:#fff;border:1px solid #c2c2c2"></div>
<div class="a" style="left:865.6px;top:599.3px;width:14.4px;height:13.8px;background:#fff;border:1px solid #c2c2c2"></div>
<svg class="a" style="left:871.2px;top:602.6px" width="4" height="7"><path d="M0 0V7L4 3.5Z" fill="#555"/></svg>
<div class="a" style="left:16px;top:620px;width:886px;height:23px;background:#f3f2f1;border-top:1px solid #c6c6c6"></div>
<div class="a t" style="left:24.2px;top:626px;line-height:12px;font-size:11.6px;letter-spacing:0.01px;color:#444;">Готово</div>
<svg class="a" style="left:80.3px;top:625.2px" width="15" height="12.5"><path d="M.5 .6H13.2V4 M.5 .6V11.6H6" fill="none" stroke="#444" stroke-width="1.1"/><path d="M.5 2.6H13.2" stroke="#444" stroke-width="1"/><path d="M2.6 5.2H4.4M2.6 7.4H4.4M2.6 9.6H4.4M5.6 5.2H7" stroke="#444" stroke-width=".9"/><circle cx="10.6" cy="8.2" r="3.9" fill="#f3f2f1" stroke="#444" stroke-width="1.1"/><circle cx="10.6" cy="8.2" r="1.9" fill="#444"/></svg>
<div class="a t" style="left:267.6px;top:626px;line-height:12px;font-size:11.6px;letter-spacing:-0.38px;color:#444;">Среднее: 43998,2</div>
<div class="a t" style="left:397.0px;top:626px;line-height:12px;font-size:11.6px;letter-spacing:0.02px;color:#444;">Количество: 11</div>
<div class="a t" style="left:493.0px;top:626px;line-height:12px;font-size:11.6px;letter-spacing:-0.43px;color:#444;">Сумма: 439982</div>
<div class="a" style="left:587.2px;top:621px;width:39.5px;height:22px;background:#cacaca;"></div>
<svg class="a" style="left:599.7px;top:624.3px" width="14" height="13"><rect x=".55" y=".55" width="12.9" height="11.9" fill="none" stroke="#444" stroke-width="1.1"/><path d="M.5 4.5H13.5M.5 8.5H13.5M4.8 .5V12.5M9.2 .5V12.5" stroke="#444" stroke-width="1"/></svg>
<svg class="a" style="left:639.6px;top:624.3px" width="14.4" height="13"><rect x=".55" y=".55" width="13.3" height="11.9" fill="none" stroke="#444" stroke-width="1.1"/><rect x="3.5" y="3.3" width="7.4" height="6.4" fill="none" stroke="#444" stroke-width="1"/><path d="M5 5.4H9.4M5 7.4H9.4" stroke="#444" stroke-width=".9"/></svg>
<svg class="a" style="left:680px;top:624.3px" width="14.4" height="13"><rect x=".55" y=".55" width="13.3" height="11.9" fill="none" stroke="#444" stroke-width="1.1"/><path d="M5.2 .5V6.6H13.8 M9.4 .5V6.6" fill="none" stroke="#444" stroke-width="1"/></svg>
<div class="a" style="left:712.6px;top:630px;width:8.2px;height:1.1px;background:#444;"></div>
<div class="a" style="left:726.3px;top:630px;width:99.4px;height:1px;background:#a0a0a0;"></div>
<div class="a" style="left:774px;top:625px;width:5px;height:12px;background:#6a6a6a;"></div>
<div class="a" style="left:830.3px;top:630px;width:9px;height:1.1px;background:#444;"></div>
<div class="a" style="left:834.3px;top:626px;width:1.1px;height:9px;background:#444;"></div>
<div class="a t" style="left:852.5px;top:626px;line-height:12px;font-size:11.6px;letter-spacing:-0.68px;color:#444;">100 %</div>
<div id="winb" class="a"></div>
</div>
<!-- overlay -->
<div class="a" style="left:385.1px;top:50.2px;width:76.5px;height:33.099999999999994px;border:3.5px solid transparent;border-radius:9.25px;box-shadow:0 0 4px 1px rgba(0,0,0,.42)"></div><div class="a" style="left:388.6px;top:53.7px;width:69.5px;height:26.099999999999994px;border-radius:4.75px;box-shadow:inset 0 0 5px 1px rgba(0,0,0,.45)"></div><svg class="a" style="left:0px;top:0px" width="918" height="659"><rect x="386.85" y="51.95" width="73.0" height="29.599999999999994" rx="7" fill="none" stroke="#fb0000" stroke-width="4.5"/></svg>
<div class="a" style="left:256.54999999999995px;top:79.55000000000001px;width:198.90000000000003px;height:103.89999999999999px;border:3.7px solid transparent;border-radius:9.85px;box-shadow:0 0 4px 1px rgba(0,0,0,.42)"></div><div class="a" style="left:260.25px;top:83.25px;width:191.50000000000006px;height:96.49999999999999px;border-radius:5.15px;box-shadow:inset 0 0 5px 1px rgba(0,0,0,.45)"></div><svg class="a" style="left:0px;top:0px" width="918" height="659"><rect x="258.4" y="81.4" width="195.20000000000005" height="100.19999999999999" rx="7.5" fill="none" stroke="#fb0000" stroke-width="4.7"/></svg>
<svg class="a" style="left:0px;top:0px" width="918" height="659"><defs><radialGradient id="g1" cx="30%" cy="25%" r="85%"><stop offset="0" stop-color="#ff9d66"/><stop offset=".45" stop-color="#ff6a35"/><stop offset="1" stop-color="#ff3308"/></radialGradient></defs><circle cx="473.8" cy="34.4" r="22.8" fill="url(#g1)" stroke="#c62a06" stroke-width="1"/><path transform="translate(0.0 0.0)" d="M476.6 24.7H472.4L468.1 28.3V32.4L471.5 30V44.3H476.6Z" fill="#fff" stroke="#000" stroke-width="3" stroke-linejoin="round" paint-order="stroke"/></svg>
<svg class="a" style="left:0px;top:0px" width="918" height="659"><defs><radialGradient id="g2" cx="30%" cy="25%" r="85%"><stop offset="0" stop-color="#ff9d66"/><stop offset=".45" stop-color="#ff6a35"/><stop offset="1" stop-color="#ff3308"/></radialGradient></defs><circle cx="247.5" cy="185.7" r="22.9" fill="url(#g2)" stroke="#c62a06" stroke-width="1"/><text x="246.9" y="195.39999999999998" text-anchor="middle" font-family="Liberation Sans" font-weight="700" font-size="27.5" fill="#fff" stroke="#000" stroke-width="3" stroke-linejoin="round" paint-order="stroke">2</text></svg>
</body></html>
